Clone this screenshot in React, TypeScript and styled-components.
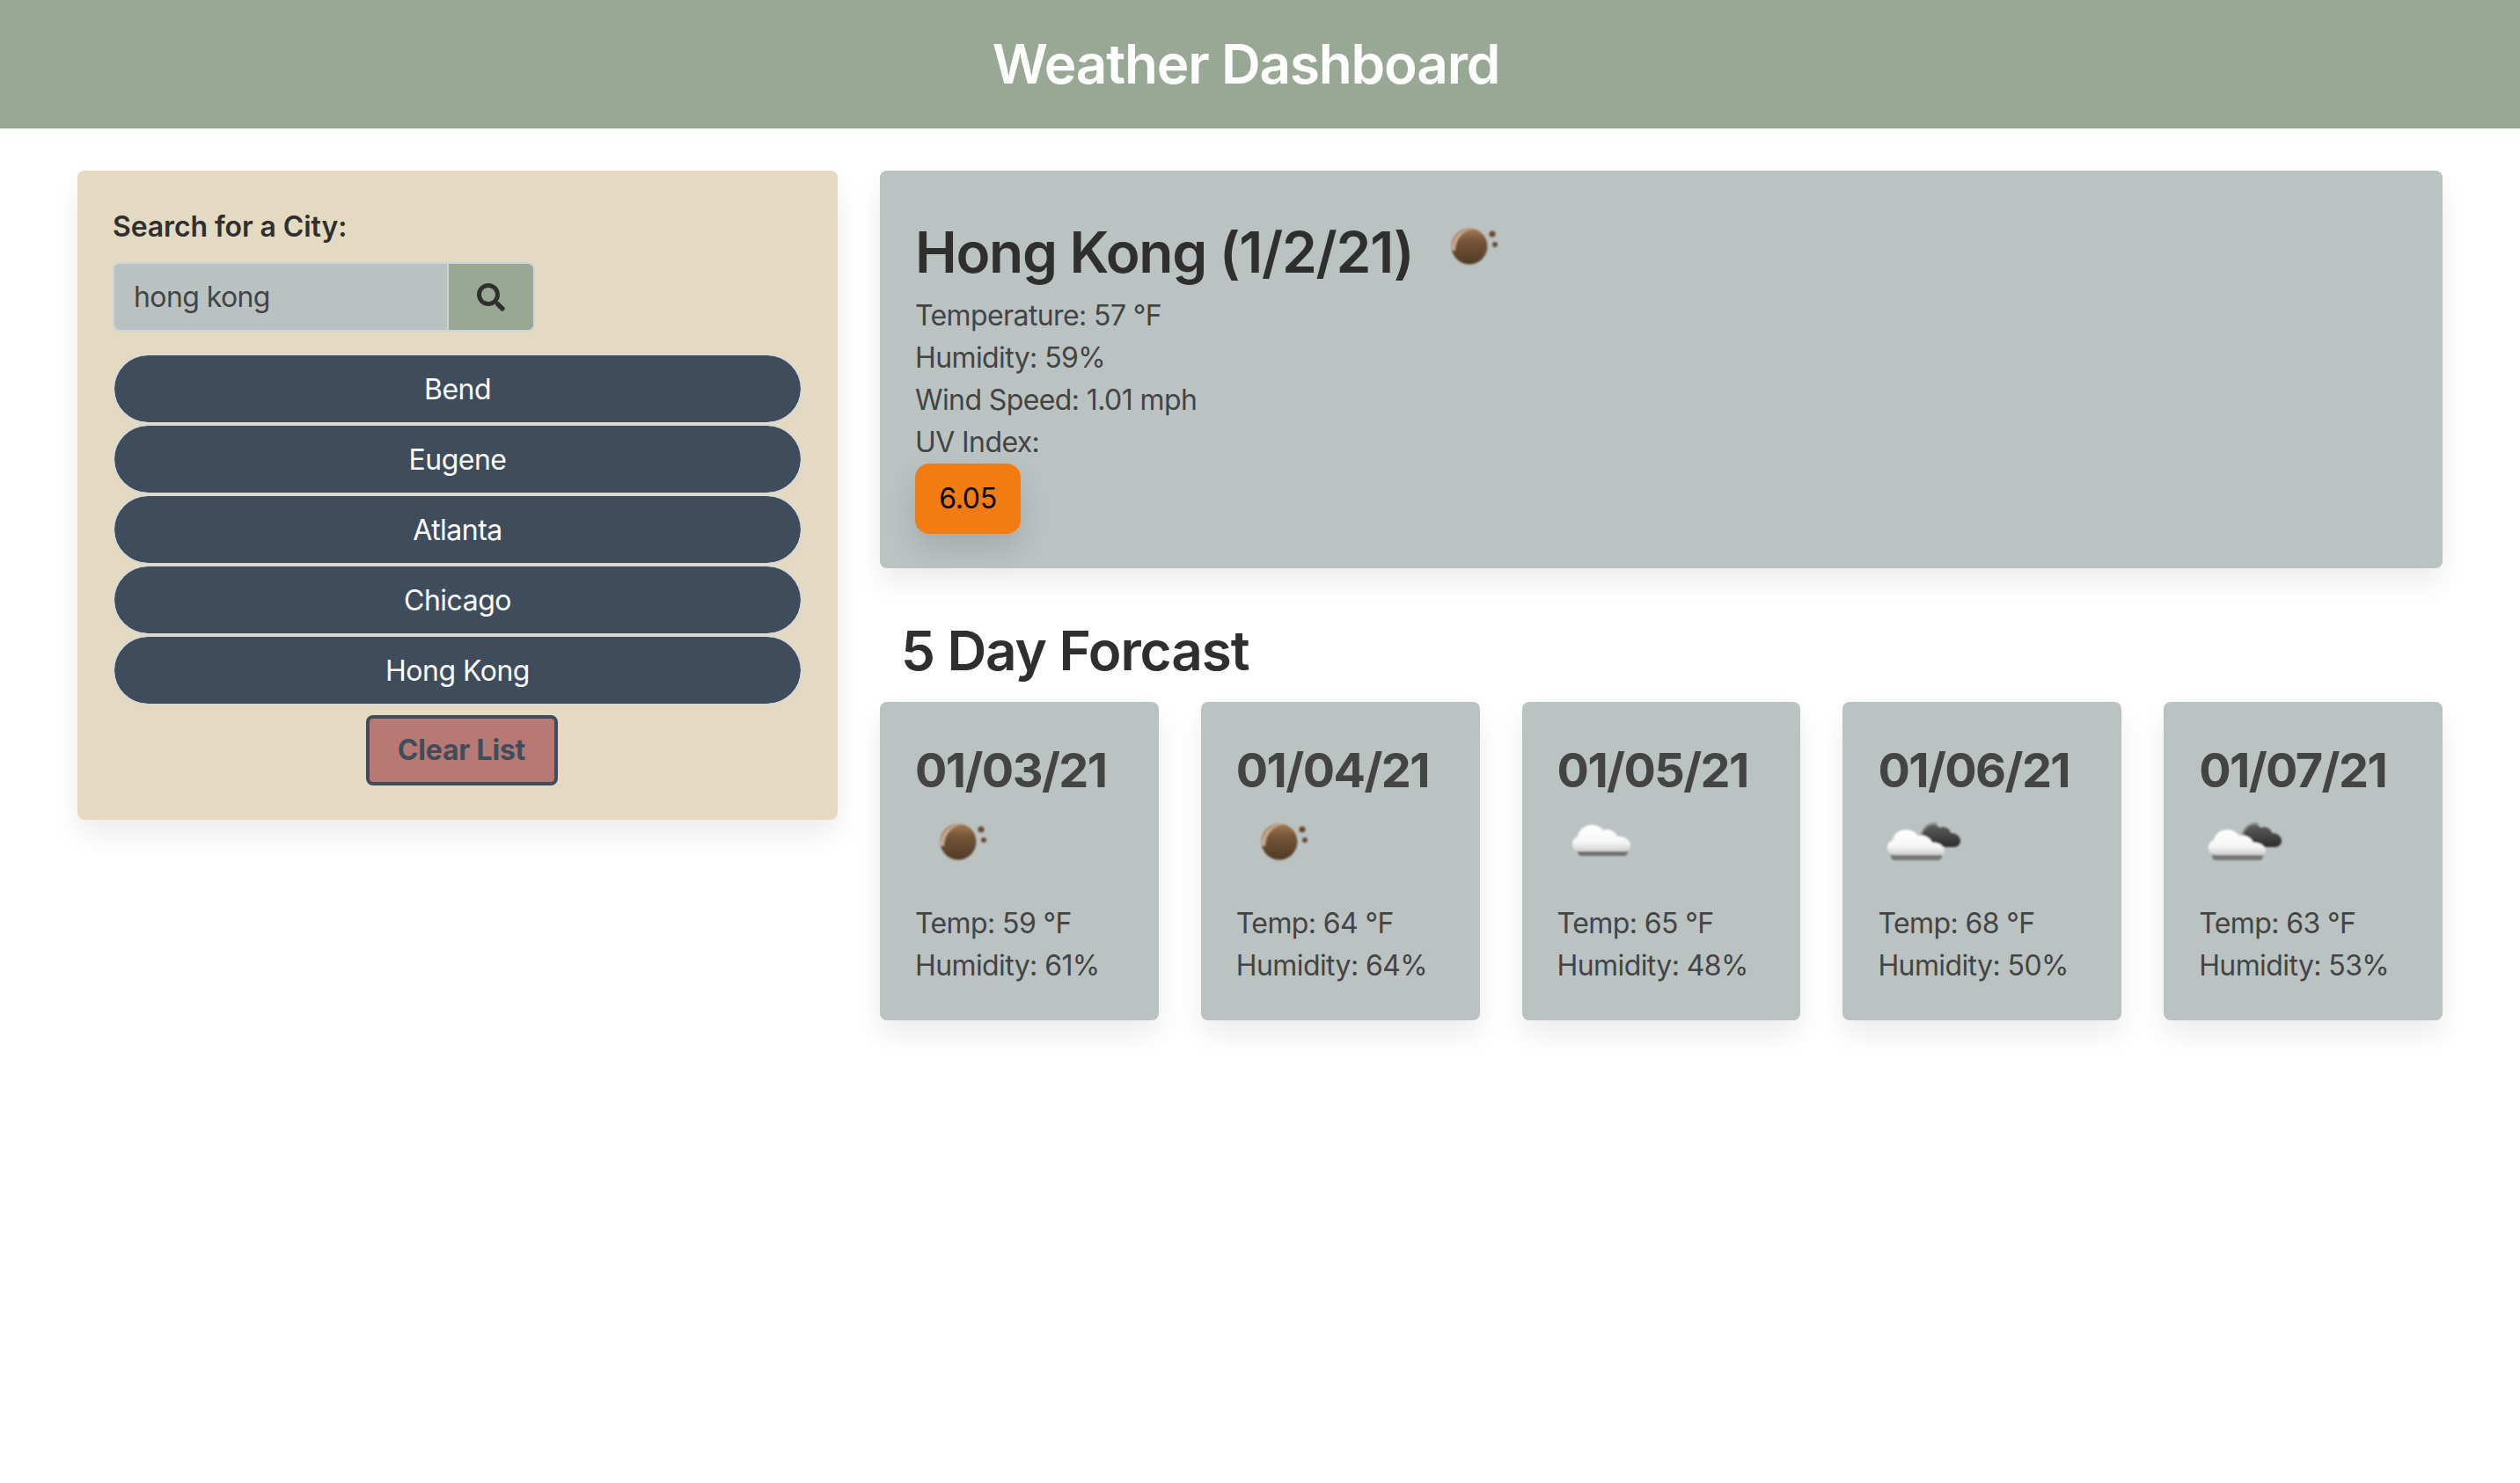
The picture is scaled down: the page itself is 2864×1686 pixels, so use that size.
import React from "react";
import styled, { createGlobalStyle } from "styled-components";
import { FaSearch } from "react-icons/fa";

const Global = createGlobalStyle`
  html, body { margin: 0; padding: 0; background: #fff; }
  body { font-family: Inter, "Liberation Sans", sans-serif; font-size: 32px; line-height: 48px; color: #444; }
  * { box-sizing: border-box; }
`;

const Header = styled.header`
  height: 146px; background: #99a894; display: flex; align-items: center; justify-content: center; padding-right: 32px;
`;
const Title = styled.h1`
  margin: 0; font-size: 62px; line-height: 1.2; font-weight: 600; color: #fff; letter-spacing: -1.2px;
`;
const Main = styled.main`
  display: flex; gap: 48px; padding: 48px 88px 120px; align-items: flex-start;
`;
const Side = styled.aside`
  width: 864px; flex: none; background: #e4dac2; border-radius: 8px; padding: 40px 40px 39px;
  box-shadow: 0 16px 32px rgba(0,0,0,.08);
`;
const Label = styled.label`
  display: block; font-weight: 600; font-size: 32px; line-height: 48px; color: #2f2f2f; margin-bottom: 16px; letter-spacing: -0.1px;
`;
const SearchRow = styled.div`
  display: flex; width: 480px; height: 79px; margin-bottom: 25px;
`;
const SearchInput = styled.input`
  flex: 1; min-width: 0; font: inherit; color: #444; background: #b9c2c1; border: 2px solid #ced4da; border-right-width: 1px;
  border-radius: 8px 0 0 8px; padding: 0 22px; outline: none; letter-spacing: -0.6px;
`;
const SearchButton = styled.button`
  width: 99px; background: #99a894; border: 2px solid #ced4da; border-left-width: 1px; border-radius: 0 8px 8px 0;
  display: flex; align-items: center; justify-content: center; padding: 0; color: #2f2f2f;
`;
const CityList = styled.div`
  display: flex; flex-direction: column;
`;
const City = styled.button`
  height: 80px; border: 2px solid #d8d8d5; border-radius: 40px; background: #3e4c5b; background-clip: padding-box; color: #fff; font: inherit; font-size: 32px; letter-spacing: -0.5px;
  padding: 2px 0 0;
`;
const ClearRow = styled.div`
  display: flex; justify-content: center; margin: 11px 0 0; padding-left: 9px;
`;
const Clear = styled.button`
  width: 218px; height: 80px; background: #b87874; border: 4px solid #3e4c5b; border-radius: 8px;
  color: #3e4c5b; font: inherit; font-weight: 700; letter-spacing: -0.2px; padding: 0;
`;
const Content = styled.section`
  flex: 1; min-width: 0;
`;
const Today = styled.div`
  background: #bac3c2; border-radius: 8px; padding: 40px; height: 452px;
  box-shadow: 0 16px 32px rgba(0,0,0,.08);
`;
const CityTitle = styled.h2`
  margin: 0; height: 101px; padding-top: 5px; font-size: 64px; line-height: 96px; font-weight: 600; color: #2f2f2f; display: flex; align-items: flex-start; letter-spacing: -1.3px;
`;
const Line = styled.div`
  letter-spacing: -0.6px;
`;
const Uv = styled.div`
  width: 120px; height: 80px; background: #f27c12; color: #000; border-radius: 16px; display: flex; align-items: center; justify-content: center;
  box-shadow: 0 16px 32px rgba(0,0,0,.12); letter-spacing: -0.3px;
`;
const ForecastTitle = styled.h2`
  margin: 48px 0 0 24px; font-size: 62px; line-height: 92px; font-weight: 600; color: #2f2f2f; letter-spacing: -1.1px; height: 104px;
`;
const Cards = styled.div`
  display: flex; gap: 48px;
`;
const Card = styled.div`
  flex: 1; height: 362px; background: #bac3c2; border-radius: 8px; padding: 40px;
  box-shadow: 0 16px 32px rgba(0,0,0,.08);
`;
const Date = styled.h3`
  margin: 0; padding-top: 7px; font-size: 54px; line-height: 62px; font-weight: 700; color: #444; letter-spacing: -1.6px; white-space: nowrap;
`;
const IconWrap = styled.div`
  width: 100px; height: 100px; margin-bottom: 19px;
`;
const BigIcon = styled.span`
  display: block; width: 100px; height: 100px; margin: -9px 0 0 15px; flex: none;
`;

function Defs() {
  return (
    <svg width="0" height="0" style={{ position: "absolute" }} aria-hidden="true">
      <defs>
        <linearGradient id="ball" x1="0" y1="0" x2="0" y2="1">
          <stop offset="0" stopColor="#a47c56" />
          <stop offset=".35" stopColor="#75553a" />
          <stop offset="1" stopColor="#523a24" />
        </linearGradient>
        <linearGradient id="white" x1="0" y1="0" x2="0" y2="1">
          <stop offset="0" stopColor="#ffffff" />
          <stop offset=".65" stopColor="#f6f6f6" />
          <stop offset="1" stopColor="#cfcfcf" />
        </linearGradient>
        <linearGradient id="dark" x1="0" y1="0" x2="0" y2="1">
          <stop offset="0" stopColor="#5f5f5f" />
          <stop offset="1" stopColor="#2c2c2c" />
        </linearGradient>
        <filter id="soft" x="-20%" y="-20%" width="140%" height="140%">
          <feGaussianBlur stdDeviation=".8" />
        </filter>
      </defs>
    </svg>
  );
}

const Haze = () => (
  <svg width="100" height="100" viewBox="0 0 100 100">
    <g filter="url(#soft)">
      <circle cx="49" cy="50" r="20.5" fill="url(#ball)" />
      <path d="M29 54 C28 40 39 29 54 30 C42 32 33 41 33 55 Z" fill="#c9a98c" />
      <circle cx="75" cy="36" r="3.6" fill="#6b4c33" />
      <circle cx="78" cy="48" r="3" fill="#6b4c33" />
    </g>
  </svg>
);
const Cloud = () => (
  <svg width="100" height="100" viewBox="0 0 100 100">
    <g filter="url(#soft)">
      <rect x="23" y="57" width="57" height="9" rx="4.5" fill="#6e6e6e" />
      <path d="M25 61 C15 61 14 47 23 44 C25 30 44 26 52 37 C58 34 66 38 68 44 C75 43 83 48 83 54 C83 59 80 61 76 61 Z" fill="url(#white)" />
    </g>
  </svg>
);
const DarkCloud = () => (
  <svg width="100" height="100" viewBox="0 0 100 100">
    <g filter="url(#soft)">
      <path d="M50 44 C52 32 64 26 70 34 C76 32 82 35 83 40 C90 40 95 45 94 50 C93 54 90 56 86 56 L66 56 Z" fill="url(#dark)" />
      <path d="M49 44 C51 33 60 27 68 30" fill="none" stroke="#8a8a8a" strokeWidth="2" />
      <rect x="15" y="62" width="58" height="9" rx="4.5" fill="#777" />
      <path d="M19 65 C9 65 8 51 17 48 C19 35 38 32 46 43 C52 41 60 45 62 51 C67 50 76 54 76 60 C76 63 74 65 70 65 Z" fill="url(#white)" />
    </g>
  </svg>
);

const days = [
  { date: "01/03/21", icon: <Haze />, temp: 59, hum: 61 },
  { date: "01/04/21", icon: <Haze />, temp: 64, hum: 64 },
  { date: "01/05/21", icon: <Cloud />, temp: 65, hum: 48 },
  { date: "01/06/21", icon: <DarkCloud />, temp: 68, hum: 50 },
  { date: "01/07/21", icon: <DarkCloud />, temp: 63, hum: 53 },
];

export default function App() {
  return (
    <>
      <Global />
      <Defs />
      <Header><Title>Weather Dashboard</Title></Header>
      <Main>
        <Side>
          <Label>Search for a City:</Label>
          <SearchRow>
            <SearchInput defaultValue="hong kong" />
            <SearchButton aria-label="search"><FaSearch size={32} /></SearchButton>
          </SearchRow>
          <CityList>
            {["Bend", "Eugene", "Atlanta", "Chicago", "Hong Kong"].map((c) => <City key={c}>{c}</City>)}
          </CityList>
          <ClearRow><Clear>Clear List</Clear></ClearRow>
        </Side>
        <Content>
          <Today>
            <CityTitle>Hong Kong (1/2/21)<BigIcon><Haze /></BigIcon></CityTitle>
            <Line>Temperature: 57 °F</Line>
            <Line>Humidity: 59%</Line>
            <Line>Wind Speed: 1.01 mph</Line>
            <Line>UV Index:</Line>
            <Uv>6.05</Uv>
          </Today>
          <ForecastTitle>5 Day Forcast</ForecastTitle>
          <Cards>
            {days.map((d) => (
              <Card key={d.date}>
                <Date>{d.date}</Date>
                <IconWrap>{d.icon}</IconWrap>
                <Line>Temp: {d.temp} °F</Line>
                <Line>Humidity: {d.hum}%</Line>
              </Card>
            ))}
          </Cards>
        </Content>
      </Main>
    </>
  );
}
